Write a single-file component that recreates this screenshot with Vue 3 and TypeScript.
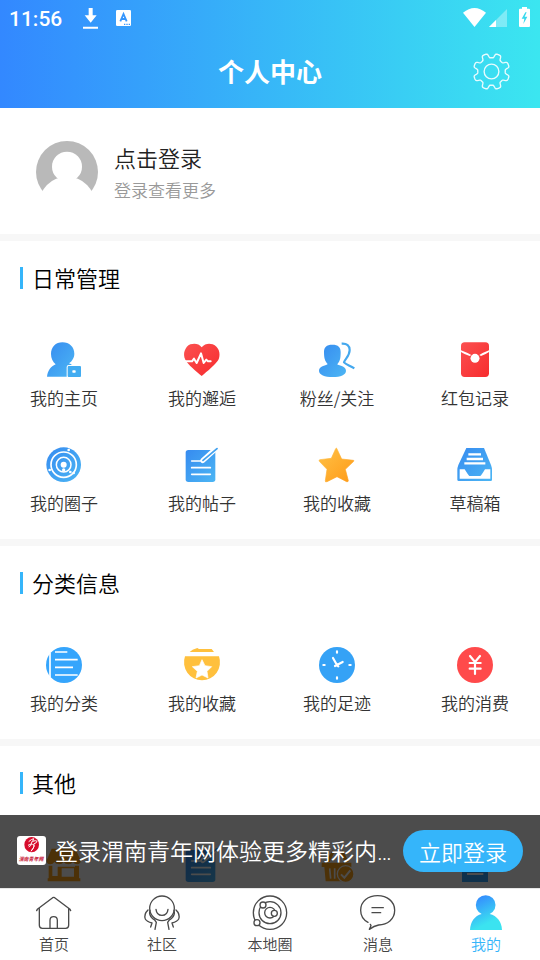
<script setup lang="ts">
interface Entry {
  icon: string
  label?: string
}
interface Section {
  title: string
  entries: Entry[]
}

const sections: Section[] = [
  {
    title: '日常管理',
    entries: [
      { icon: 'home-user', label: '我的主页' },
      { icon: 'heart', label: '我的邂逅' },
      { icon: 'fans', label: '粉丝/关注' },
      { icon: 'packet', label: '红包记录' },
      { icon: 'circle', label: '我的圈子' },
      { icon: 'post', label: '我的帖子' },
      { icon: 'star', label: '我的收藏' },
      { icon: 'draft', label: '草稿箱' },
    ],
  },
  {
    title: '分类信息',
    entries: [
      { icon: 'list', label: '我的分类' },
      { icon: 'favorite', label: '我的收藏' },
      { icon: 'clock', label: '我的足迹' },
      { icon: 'yen', label: '我的消费' },
    ],
  },
  {
    title: '其他',
    entries: [{ icon: 'shop' }, { icon: 'post' }, { icon: 'cart' }, { icon: 'order' }],
  },
]

const tabs: Entry[] = [
  { icon: 'home', label: '首页' },
  { icon: 'community', label: '社区' },
  { icon: 'local', label: '本地圈' },
  { icon: 'message', label: '消息' },
  { icon: 'me', label: '我的' },
]

// Outline of an eight-tooth cog, sampled around the circle
function cogPath(): string {
  const points: string[] = []
  for (let i = 0; i < 240; i++) {
    const a = (i / 240) * Math.PI * 2
    const wave = Math.tanh(-2.6 * Math.cos(8 * a) + 0.1)
    const r = 46.5 + 6.5 * wave
    points.push(`${(54 + r * Math.cos(a)).toFixed(1)} ${(54 + r * Math.sin(a)).toFixed(1)}`)
  }
  return `M${points.join('L')}Z`
}
const cog = cogPath()
</script>

<template>
  <div class="screen">
    <svg class="defs" width="0" height="0">
      <defs>
        <linearGradient id="blue" x1="0" y1="0" x2="1" y2="1">
          <stop offset="0" stop-color="#368bf0" />
          <stop offset="1" stop-color="#4cb6f4" />
        </linearGradient>
        <linearGradient id="red" x1="0" y1="0" x2="1" y2="1">
          <stop offset="0" stop-color="#fb5050" />
          <stop offset="1" stop-color="#f72c2e" />
        </linearGradient>
        <linearGradient id="gold" x1="0" y1="0" x2="1" y2="1">
          <stop offset="0" stop-color="#ffc247" />
          <stop offset="1" stop-color="#fe9a17" />
        </linearGradient>
        <linearGradient id="cyan" gradientUnits="userSpaceOnUse" x1="25" y1="5" x2="75" y2="105">
          <stop offset="0" stop-color="#3486ff" />
          <stop offset="0.8" stop-color="#3be3f0" />
        </linearGradient>
      </defs>
    </svg>

    <header class="header">
      <div class="status">
        <span class="time">11:56</span>
        <svg class="download" viewBox="0 0 45 63">
          <path d="M17 0h12v22h12L23 44 5 22h12zM0 56h45v6H0z" fill="#fff" />
        </svg>
        <svg class="lang" viewBox="0 0 45 48">
          <rect width="45" height="48" rx="4" fill="#fff" />
          <path d="M13 34L22.500 12 32 34M16 27h13" fill="none" stroke="#3696fd" stroke-width="5.500" />
          <path d="M24 41h4v4h-4zM31 41h4v4h-4zM38 41h4v4h-4z" fill="#3696fd" />
        </svg>
        <span class="spacer"></span>
        <svg class="wifi" viewBox="0 0 68 56">
          <path d="M0 14Q34-14 68 14L34 56z" fill="#fff" />
        </svg>
        <svg class="signal" viewBox="0 0 54 54">
          <path d="M54 0v54H0z" fill="#fff" opacity="0.35" />
          <path d="M21 33v21H0z" fill="#fff" />
        </svg>
        <svg class="battery" viewBox="0 0 33 60">
          <path d="M9 0h15v5h6q3 0 3 3v49q0 3-3 3H3q-3 0-3-3V8q0-3 3-3h6z" fill="#fff" />
          <path d="M19 16L8 35h8l-3 16 12-22h-8l6-13z" fill="#3ad9ee" />
        </svg>
      </div>
      <div class="titlebar">
        <span class="side"></span>
        <h1>个人中心</h1>
        <span class="side">
          <svg class="gear" viewBox="0 0 108 108" fill="none" stroke="#fff" stroke-opacity="0.88" stroke-width="4">
            <path :d="cog" />
            <circle cx="54" cy="54" r="21.500" />
          </svg>
        </span>
      </div>
    </header>

    <main class="content">
      <section class="profile">
        <svg class="avatar" viewBox="0 0 186 186">
          <circle cx="93" cy="93" r="93" fill="#b9b9b9" />
          <circle cx="93" cy="77" r="45" fill="#fff" />
          <circle cx="93" cy="192" r="85" fill="#fff" />
        </svg>
        <div class="who">
          <div class="name">点击登录</div>
          <div class="hint">登录查看更多</div>
        </div>
      </section>

      <section v-for="section in sections" :key="section.title" class="section">
        <h2>{{ section.title }}</h2>
        <div class="grid">
          <div v-for="(entry, i) in section.entries" :key="i" class="entry">
            <svg class="icon" viewBox="0 0 108 108">
              <g v-if="entry.icon === 'home-user'">
                <path d="M49.500 1C70 1 85 15 85 35c0 12-7 23-16 29 8 3 13 8 14 13v27H3C5 86 14 74 29 67 20 59 15 48 15 36 15 15 29 1 49.500 1z" fill="url(#blue)" />
                <path d="M62 104V75q0-6 6-6h40v39H62z" fill="#fff" />
                <rect x="65" y="72" width="40" height="33" rx="3" fill="#42acf1" />
                <rect x="79" y="85" width="10" height="7" rx="2" fill="#fff" />
              </g>
              <g v-else-if="entry.icon === 'heart'">
                <path d="M53 16C62 5 75 3 86 7c18 6 25 28 18 45-6 13-35 37-51 50C37 88 12 68 4 53-5 36 3 14 19 7 32 3 45 5 53 16z" fill="url(#red)" />
                <path d="M-1 58h25l6-8 8 13 13-29 8 29 8-10 5 5h8" fill="none" stroke="#fff" stroke-width="6" stroke-linejoin="round" stroke-linecap="round" />
              </g>
              <g v-else-if="entry.icon === 'fans'">
                <path d="M40 8c18 0 25 8 25 23 0 18-2 27-10 36 1 4 26 4 26 19 0 12-16 19-40 19S0 98 0 86c0-15 24-16 26-20-8-8-11-17-11-35C15 16 22 8 40 8z" fill="url(#blue)" />
                <path d="M68 5c16-1 24 6 24 19 0 19-15 27-17 37 6 7 17 9 31 18" fill="none" stroke="#44a8ee" stroke-width="6.500" stroke-linejoin="round" />
              </g>
              <g v-else-if="entry.icon === 'packet'">
                <rect x="12" y="1" width="84" height="104" rx="11" fill="url(#red)" />
                <path d="M12 25Q30 32 43 39L38 42Q22 37 12 30zM96 25Q78 32 67 39L72 42Q86 37 96 30z" fill="#fff" />
                <circle cx="54" cy="49" r="13.500" fill="#fff" />
              </g>
              <g v-else-if="entry.icon === 'circle'">
                <circle cx="53" cy="53" r="52" fill="url(#blue)" />
                <g fill="none" stroke="#fff">
                  <circle cx="53" cy="53" r="38" stroke-width="5" />
                  <circle cx="53" cy="53" r="22" stroke-width="4.500" />
                </g>
                <circle cx="53" cy="53" r="9" fill="#fff" />
                <g fill="#fff">
                  <circle cx="68" cy="9" r="4" />
                  <circle cx="11" cy="69" r="4" />
                  <circle cx="73" cy="75" r="4" />
                  <circle cx="53" cy="69" r="5" />
                  <circle cx="83" cy="78" r="4" />
                </g>
              </g>
              <g v-else-if="entry.icon === 'post'">
                <rect x="5" y="9" width="89" height="96" rx="8" fill="url(#blue)" />
                <path d="M23 42h26M23 62h56M23 82h56" stroke="#fff" stroke-width="5" stroke-linecap="round" />
                <path d="M56 41L96 5" stroke="#fff" stroke-width="15" stroke-linecap="round" />
                <path d="M57 40L99 5" stroke="#43a2ef" stroke-width="5.500" stroke-linecap="round" />
              </g>
              <g v-else-if="entry.icon === 'star'">
                <path d="M53 4l15 32 35 4q3 0 1 3L79 67l9 34q0 4-5 3L54 89l-30 15q-6 2-5-3l5-34L1 43q-3-4 2-5l34-4L50 5q2-3 3-1z" fill="url(#gold)" stroke="url(#gold)" stroke-width="2" stroke-linejoin="round" />
              </g>
              <g v-else-if="entry.icon === 'draft'">
                <path d="M28 3h53l21 51q3 8 3 15v29q0 4-4 4H5q-4 0-4-4V69q0-7 3-15z" fill="url(#blue)" />
                <path d="M34 22h38M29 36h49M22 49h63" stroke="#fff" stroke-width="7" />
                <path d="M8 67h15q11 18 14 20h33q4-3 14-20h16v28H8z" fill="#fff" />
              </g>
              <g v-else-if="entry.icon === 'list'">
                <circle cx="54" cy="54" r="54" fill="#35a5fc" />
                <path d="M12 17v73M27 15h37M27 38h68M27 61h54M27 84h68" stroke="#fff" stroke-width="5" />
              </g>
              <g v-else-if="entry.icon === 'favorite'">
                <path d="M26 8L40 3l5 3h38l7 9H17zM3 28h102a54 54 0 1 1-102 0z" fill="#ffc03d" />
                <path d="M54 38l9 18 20 3-14 14 3 20-18-9-18 9 4-20-15-14 21-3z" fill="#fff" stroke="#fff" stroke-width="2" stroke-linejoin="round" />
              </g>
              <g v-else-if="entry.icon === 'clock'">
                <circle cx="54" cy="54" r="54" fill="#35a2f6" />
                <path d="M54 13v4M54 91v4M13 54h4M91 54h4M42 33l13 23M48 57l23-12M54 55l4 3" stroke="#fff" stroke-width="6.500" stroke-linecap="round" />
              </g>
              <g v-else-if="entry.icon === 'yen'">
                <circle cx="54" cy="54" r="54" fill="#ff4a4b" />
                <path d="M39 27l15 18 15-18M54 45v36M38 48h33M38 65h33" fill="none" stroke="#fff" stroke-width="6.500" stroke-linecap="round" />
              </g>
              <g v-else-if="entry.icon === 'shop'" fill="#ffa31c">
                <path d="M17 5h71l16 35q1 11-10 12-9 0-13-7-5 7-14 7-9 0-14-7-5 7-14 7-9 0-14-7-5 8-13 7Q1 51 2 40z" />
                <path d="M8 56h11v31h16V59h52V56h12v38h4v9H5v-9h3zM47 64h37v25H47z" fill-rule="evenodd" />
              </g>
              <g v-else-if="entry.icon === 'cart'">
                <path d="M8 47h89v13H8zM16 60h74l-4 43H20zM20 45L40 10l7 4-15 31zM65 14l7-4 17 35H76z" fill="#ffa31c" />
                <path d="M32 64l3 31M47 64v31" stroke="#fff" stroke-width="5" />
                <circle cx="80" cy="81" r="25" fill="#ffa31c" stroke="#fff" stroke-width="4" />
                <path d="M66 82l10 10 18-22" fill="none" stroke="#fff" stroke-width="6" />
              </g>
              <g v-else>
                <rect x="15" y="5" width="78" height="100" fill="#35a5fc" />
                <path d="M30 81h49" stroke="#fff" stroke-width="6" />
              </g>
            </svg>
            <span v-if="entry.label" class="label">{{ entry.label }}</span>
          </div>
        </div>
      </section>

      <div class="banner">
        <svg class="logo" viewBox="0 0 87 87">
          <rect width="87" height="87" rx="9" fill="#fff" />
          <ellipse cx="44" cy="26" rx="22" ry="23" fill="#d70c2c" />
          <path d="M35 17q9-8 15-9l-3 8q10-4 13 0-2 6-10 8 5 6-8 22M33 28q12-1 13-13M35 33q8-4 9-10M46 25q8 2 3 11l-6 8" fill="none" stroke="#fff" stroke-width="3" />
          <text x="5" y="74" textLength="74" lengthAdjust="spacingAndGlyphs" class="logo-text">渭南青年网</text>
        </svg>
        <span class="pitch">登录渭南青年网体验更多精彩内…</span>
        <button class="login" type="button">立即登录</button>
      </div>
    </main>

    <nav class="tabs">
      <div v-for="tab in tabs" :key="tab.icon" class="tab" :class="{ active: tab.icon === 'me' }">
        <svg class="icon" viewBox="0 0 108 108" fill="none" stroke="#4a4a4a" stroke-width="4" stroke-linecap="round" stroke-linejoin="round">
          <g v-if="tab.icon === 'home'">
            <path d="M2 50l2-4L50 11q3-2 6 0l46 35 2 4M10 44v50q0 9 9 9h70q9 0 9-9V44" />
            <path d="M42 102V79q0-11 11-11t11 11v23" />
          </g>
          <g v-else-if="tab.icon === 'community'">
            <circle cx="54" cy="43" r="37" />
            <path d="M36 46q2 18 18 18t18-18" />
            <path d="M12 48Q-1 60 4 75q4 8 20 12l-4 12M18 49q-4 13 7 24 8 4 12 12l-4 21M96 48q13 12 8 27-4 8-20 12l4 12M90 49q4 13-7 24-8 4-12 12l4 21" />
          </g>
          <g v-else-if="tab.icon === 'local'">
            <circle cx="54" cy="56" r="50" />
            <circle cx="54" cy="56" r="33" />
            <circle cx="54" cy="56" r="16" />
            <circle cx="15" cy="86" r="9" fill="#fff" />
            <circle cx="33" cy="33" r="9" fill="#fff" />
            <circle cx="67" cy="58" r="9" fill="#fff" />
          </g>
          <g v-else-if="tab.icon === 'message'">
            <path d="M24 85C10 78 2 65 2 49 2 21 25 5 53 5s51 17 51 44-22 44-48 44q-14 3-28 13l5-11-2-4" />
            <path d="M36 41h34M36 56h26" />
          </g>
          <g v-else fill="url(#cyan)" stroke="none">
            <circle cx="53" cy="33" r="29.500" />
            <path d="M41 60h24c22 5 36 24 37 48H6c1-24 14-43 35-48z" />
          </g>
        </svg>
        <span>{{ tab.label }}</span>
      </div>
    </nav>
  </div>
</template>

<style>
body {
  margin: 0;
  overflow: hidden;
}
</style>

<style scoped>
.screen {
  position: relative;
  display: flex;
  flex-direction: column;
  width: 540px;
  height: 960px;
  overflow: hidden;
  background: #fff;
  color: #000;
  font-family: 'Noto Sans CJK SC', sans-serif;
  font-weight: 350;
}
.defs {
  position: absolute;
}
svg {
  display: block;
  flex: none;
}
.header {
  flex: none;
  box-sizing: border-box;
  height: 108px;
  background: linear-gradient(90deg, #3388ff, #3be6f0);
}
.status {
  display: flex;
  align-items: center;
  height: 36px;
  padding: 0 10px 0 9px;
}
.time {
  width: 74px;
  padding-top: 1px;
  color: #fff;
  font: 500 21px/36px Roboto, sans-serif;
}
.download {
  width: 15px;
  height: 21px;
}
.lang {
  width: 15px;
  height: 16px;
  margin-left: 18px;
}
.spacer {
  flex: 1;
}
.wifi {
  width: 23px;
  height: 19px;
  margin-top: -2px;
}
.signal {
  width: 18px;
  height: 18px;
  margin-left: 3px;
}
.battery {
  width: 11px;
  height: 20px;
  margin: -2px 0 0 12px;
}
.titlebar {
  display: flex;
  align-items: center;
  justify-content: space-between;
  height: 70px;
}
.titlebar h1 {
  margin: 0;
  color: #fff;
  font-size: 26px;
  font-weight: 700;
  line-height: 70px;
}
.side {
  display: flex;
  justify-content: flex-end;
  width: 66px;
  padding-right: 30px;
}
.side:first-child {
  padding: 0 0 0 30px;
}
.gear {
  width: 37px;
  height: 37px;
}
.content {
  position: relative;
  flex: 1;
  min-height: 0;
  overflow: hidden;
}
.profile {
  display: flex;
  box-sizing: border-box;
  height: 126px;
  padding: 33px 36px 0;
}
.avatar {
  width: 62px;
  height: 62px;
}
.who {
  margin-left: 16px;
}
.name {
  color: #222;
  font-size: 22px;
  line-height: 32px;
}
.hint {
  color: #999;
  font-size: 17px;
  line-height: 34px;
}
.section {
  box-sizing: border-box;
  border-top: 7px solid #f7f7f7;
  padding-top: 26px;
}
.section h2 {
  height: 22px;
  margin: 0 0 0 20px;
  padding-left: 9px;
  border-left: 3px solid #35b5fa;
  font-size: 22px;
  font-weight: 350;
  line-height: 20px;
}
.grid {
  display: grid;
  grid-template-columns: 138px 138px 132px 144px;
  grid-auto-rows: 105px;
  margin: 53px -7px -13px -5px;
}
.entry {
  display: flex;
  flex-direction: column;
  align-items: center;
}
.icon {
  width: 36px;
  height: 36px;
  overflow: visible;
}
.label {
  margin-top: 7px;
  color: #333;
  font-size: 17px;
  line-height: 26px;
}
.banner {
  position: absolute;
  right: 0;
  bottom: 0;
  left: 0;
  display: flex;
  align-items: center;
  box-sizing: border-box;
  height: 73px;
  padding: 0 17px 2px;
  background: rgba(0, 0, 0, 0.7);
}
.logo {
  width: 29px;
  height: 29px;
}
.logo-text {
  fill: #c81838;
  font-size: 16px;
  font-style: italic;
  font-weight: 700;
}
.pitch {
  flex: 1;
  margin-left: 9px;
  padding-top: 5px;
  color: #fff;
  font-family: Roboto, 'Noto Sans CJK SC', sans-serif;
  font-size: 23px;
  line-height: 36px;
  white-space: nowrap;
}
.login {
  flex: none;
  width: 120px;
  height: 42px;
  padding: 0;
  border: 0;
  border-radius: 21px;
  background: #35b5fa;
  color: #fff;
  font-family: inherit;
  font-size: 22px;
  font-weight: 350;
  line-height: 42px;
}
.tabs {
  display: flex;
  flex: none;
  box-sizing: border-box;
  height: 72px;
  padding-top: 5px;
  border-top: 1px solid #e6e6e6;
  background: #fff;
}
.tab {
  display: flex;
  flex: 1;
  flex-direction: column;
  align-items: center;
  color: #444;
  font-size: 15px;
  line-height: 27px;
}
.tab.active {
  color: #35b5fa;
}
</style>
